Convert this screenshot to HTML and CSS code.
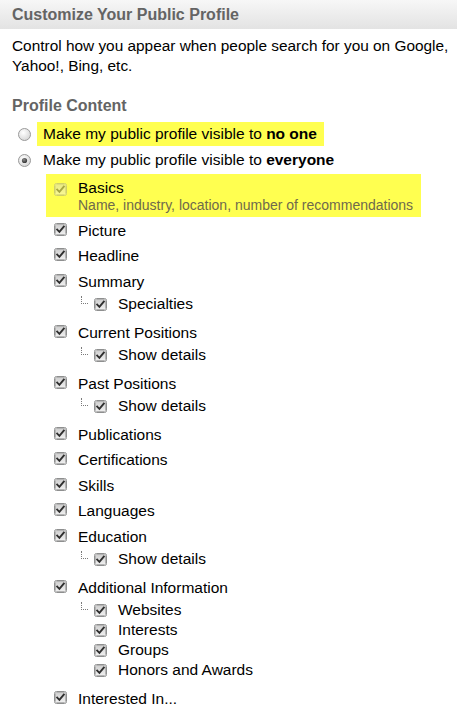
FILE: index.html
```html
<!DOCTYPE html>
<html>
<head>
<meta charset="utf-8">
<link rel="stylesheet" href="styles.css">
</head>
<body>
<svg class="defs" width="0" height="0" aria-hidden="true">
  <defs>
    <linearGradient id="cbfill" x1="0" y1="0" x2="0" y2="1">
      <stop offset="0" stop-color="#cfcfcf"/>
      <stop offset="1" stop-color="#f0f0f0"/>
    </linearGradient>
    <radialGradient id="rfill" cx="0.4" cy="0.35" r="0.7">
      <stop offset="0" stop-color="#ffffff"/>
      <stop offset="1" stop-color="#d4d4d4"/>
    </radialGradient>
    <radialGradient id="rdot" cx="0.4" cy="0.35" r="0.7">
      <stop offset="0" stop-color="#8a8a8a"/>
      <stop offset="1" stop-color="#2e2e2e"/>
    </radialGradient>
    <symbol id="cb" viewBox="0 0 13 13">
      <rect x="0.5" y="0.5" width="12" height="12" rx="2" fill="#fff" stroke="#8e8f8f"/>
      <rect x="1.5" y="1.5" width="10" height="10" rx="1" fill="url(#cbfill)" stroke="#b5b5b5"/>
      <path d="M3.2 6.6 L5.4 8.9 L9.8 3.6" fill="none" stroke="#2f2f2f" stroke-width="1.9" stroke-linecap="square"/>
    </symbol>
  </defs>
</svg>

<div class="header">Customize Your Public Profile</div>
<p class="intro">Control how you appear when people search for you on Google, Yahoo!, Bing, etc.</p>
<h2 class="section-title">Profile Content</h2>

<div class="radio-row">
  <svg class="radio" viewBox="0 0 13 13"><circle cx="6.5" cy="6.5" r="6" fill="url(#rfill)" stroke="#9a9a9a"/></svg>
  <span class="radio-label hl">Make my public profile visible to <b>no one</b></span>
</div>
<div class="radio-row">
  <svg class="radio" viewBox="0 0 13 13"><circle cx="6.5" cy="6.5" r="6" fill="url(#rfill)" stroke="#9a9a9a"/><circle cx="6.5" cy="6.5" r="2.6" fill="url(#rdot)"/></svg>
  <span class="radio-label">Make my public profile visible to <b>everyone</b></span>
</div>

<div class="basics hl">
  <svg class="cb cb-disabled"><use href="#cb"/></svg>
  <div class="basics-text">
    <div class="basics-title">Basics</div>
    <div class="basics-sub">Name, industry, location, number of recommendations</div>
  </div>
</div>

<ul class="fields">
  <li class="field"><div class="row"><svg class="cb"><use href="#cb"/></svg><span>Picture</span></div></li>
  <li class="field"><div class="row"><svg class="cb"><use href="#cb"/></svg><span>Headline</span></div></li>
  <li class="field"><div class="row"><svg class="cb"><use href="#cb"/></svg><span>Summary</span></div>
    <ul class="subfields">
      <li class="subfield first"><svg class="cb"><use href="#cb"/></svg><span>Specialties</span></li>
    </ul>
  </li>
  <li class="field"><div class="row"><svg class="cb"><use href="#cb"/></svg><span>Current Positions</span></div>
    <ul class="subfields">
      <li class="subfield first"><svg class="cb"><use href="#cb"/></svg><span>Show details</span></li>
    </ul>
  </li>
  <li class="field"><div class="row"><svg class="cb"><use href="#cb"/></svg><span>Past Positions</span></div>
    <ul class="subfields">
      <li class="subfield first"><svg class="cb"><use href="#cb"/></svg><span>Show details</span></li>
    </ul>
  </li>
  <li class="field"><div class="row"><svg class="cb"><use href="#cb"/></svg><span>Publications</span></div></li>
  <li class="field"><div class="row"><svg class="cb"><use href="#cb"/></svg><span>Certifications</span></div></li>
  <li class="field"><div class="row"><svg class="cb"><use href="#cb"/></svg><span>Skills</span></div></li>
  <li class="field"><div class="row"><svg class="cb"><use href="#cb"/></svg><span>Languages</span></div></li>
  <li class="field"><div class="row"><svg class="cb"><use href="#cb"/></svg><span>Education</span></div>
    <ul class="subfields">
      <li class="subfield first"><svg class="cb"><use href="#cb"/></svg><span>Show details</span></li>
    </ul>
  </li>
  <li class="field"><div class="row"><svg class="cb"><use href="#cb"/></svg><span>Additional Information</span></div>
    <ul class="subfields">
      <li class="subfield first"><svg class="cb"><use href="#cb"/></svg><span>Websites</span></li>
      <li class="subfield"><svg class="cb"><use href="#cb"/></svg><span>Interests</span></li>
      <li class="subfield"><svg class="cb"><use href="#cb"/></svg><span>Groups</span></li>
      <li class="subfield"><svg class="cb"><use href="#cb"/></svg><span>Honors and Awards</span></li>
    </ul>
  </li>
  <li class="field"><div class="row"><svg class="cb"><use href="#cb"/></svg><span>Interested In...</span></div></li>
</ul>
</body>
</html>
```
FILE: styles.css
```css
html, body {
  margin: 0;
  padding: 0;
  background: #fff;
}
body {
  width: 457px;
  font-family: "Liberation Sans", Arial, sans-serif;
  font-size: 15.5px;
  color: #000;
  overflow: hidden;
}
.defs {
  position: absolute;
  width: 0;
  height: 0;
}
.header {
  height: 29px;
  line-height: 29px;
  padding-left: 12px;
  font-weight: bold;
  font-size: 16px;
  color: #646464;
  background: linear-gradient(#f7f7f7, #e3e3e3);
}
.intro {
  margin: 6.5px 2px 0 12px;
  font-size: 15.4px;
  line-height: 20px;
}
.section-title {
  margin: 20px 0 0 12px;
  font-size: 16px;
  line-height: 20px;
  font-weight: bold;
  color: #646464;
}
.radio-row {
  display: flex;
  align-items: center;
  height: 24px;
  padding-left: 18px;
  margin-top: 2px;
}
.section-title + .radio-row {
  margin-top: 6.5px;
}
.radio {
  width: 13px;
  height: 13px;
  flex: none;
}
.radio-label {
  margin-left: 6px;
  padding: 0 7px 0 6px;
  line-height: 24px;
}
.hl {
  background: #ffff50;
}
.basics {
  display: flex;
  align-items: flex-start;
  width: fit-content;
  margin: 2px 0 0 46px;
  padding: 4px 8px 4px 8px;
}
.basics .cb {
  margin-top: 5px;
}
.basics-text {
  margin-left: 11px;
}
.basics-title {
  line-height: 19px;
}
.basics-sub {
  font-size: 14px;
  line-height: 16px;
  color: #6f6a4c;
}
.cb {
  width: 13px;
  height: 13px;
  flex: none;
}
.cb-disabled {
  opacity: 0.42;
}
.fields {
  list-style: none;
  margin: 3.5px 0 0;
  padding: 0 0 0 54px;
  display: flex;
  flex-direction: column;
  gap: 5.5px;
}
.row, .subfield {
  display: flex;
  align-items: flex-start;
  gap: 11px;
  line-height: 20px;
}
.row .cb {
  margin-top: 2px;
}
.subfields {
  list-style: none;
  margin: 0;
  padding: 2.5px 0 3px 40px;
}
.subfield {
  position: relative;
}
.subfield .cb {
  margin-top: 4px;
}
.subfield.first::before {
  content: "";
  position: absolute;
  left: -13px;
  top: 2px;
  width: 6px;
  height: 7px;
  border-left: 1px dotted #7a7a7a;
  border-bottom: 1px dotted #7a7a7a;
}
```
